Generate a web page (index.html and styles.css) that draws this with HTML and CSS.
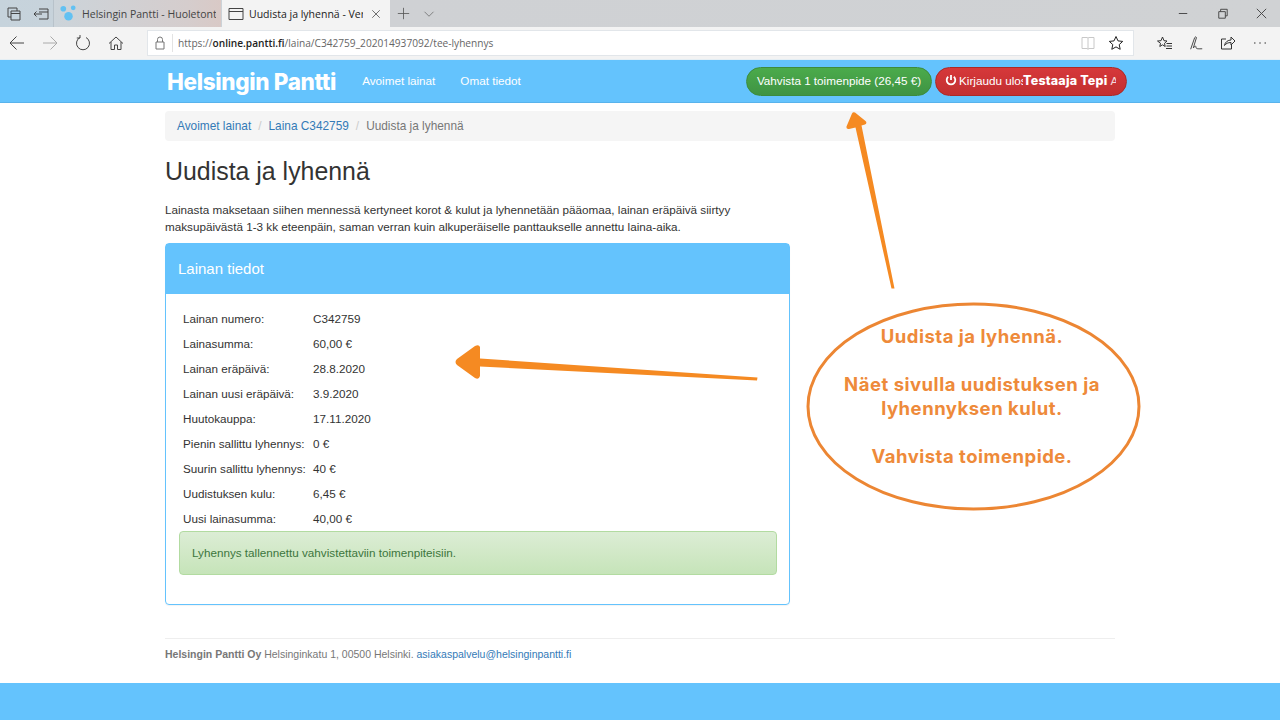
FILE: index.html
```html
<!DOCTYPE html>
<html lang="fi">
<head>
<meta charset="utf-8">
<title>Uudista ja lyhennä</title>
<link rel="stylesheet" href="styles.css">
</head>
<body>
<div class="page">
  <header class="browser">
    <div class="tabstrip">
      <div class="tab-tools">
        <svg class="ico" viewBox="0 0 16 16"><path d="M2 2h9v3M2 2v9h3M5 5h9v9H5zM5 7.500h9" /></svg>
        <svg class="ico" viewBox="0 0 16 16"><path d="M6 3h9v10H6M6 6h9M1 8h8M3.500 5.500L1 8l2.500 2.500" /></svg>
      </div>
      <div class="tab tab-inactive">
        <svg class="favicon" viewBox="0 0 18 18"><circle cx="3.500" cy="4" r="3" /><circle cx="14" cy="3" r="2.500" /><circle cx="9" cy="12" r="4.500" /></svg>
        <span class="tab-title">Helsingin Pantti - Huoletont</span>
      </div>
      <div class="tab tab-active">
        <svg class="ico" viewBox="0 0 16 16"><path d="M1 2.500h14v11H1zM1 5.500h14" /></svg>
        <span class="tab-title">Uudista ja lyhennä - Ver</span>
        <svg class="ico ico-close" viewBox="0 0 16 16"><path d="M3 3l10 10M13 3L3 13" /></svg>
      </div>
      <svg class="ico ico-new" viewBox="0 0 16 16"><path d="M8 1v14M1 8h14" /></svg>
      <svg class="ico ico-chev" viewBox="0 0 16 16"><path d="M2 5l6 6 6-6" /></svg>
      <div class="window-btns">
        <svg class="ico" viewBox="0 0 16 16"><path d="M3 8h9" /></svg>
        <svg class="ico" viewBox="0 0 16 16"><path d="M4 6h7v7H4zM6 6V3.500h7v7h-2" /></svg>
        <svg class="ico" viewBox="0 0 16 16"><path d="M3 3l10 10M13 3L3 13" /></svg>
      </div>
    </div>
    <div class="toolbar">
      <div class="nav-btns">
        <svg class="ico ico-lg" viewBox="0 0 18 18"><path d="M16 9H2M8.500 2.500L2 9l6.500 6.500" /></svg>
        <svg class="ico ico-lg ico-faint" viewBox="0 0 18 18"><path d="M2 9h14M9.500 2.500L16 9l-6.500 6.500" /></svg>
        <svg class="ico ico-lg" viewBox="0 0 18 18"><path d="M6 3.500A6.500 6.500 0 1 0 12 3.500M6 1v3H2.800" /></svg>
        <svg class="ico ico-lg" viewBox="0 0 18 18"><path d="M2 9.500L9 3l7 6.500M4 8v7.500h3.500V11h3v4.500H14V8" /></svg>
      </div>
      <div class="addressbar">
        <svg class="ico ico-lock" viewBox="0 0 12 14"><path d="M2 6h8v7H2zM3.500 6V3.500a2.500 2.500 0 0 1 5 0V6" /></svg>
        <span class="url">https://<b>online.pantti.fi</b>/laina/C342759_202014937092/tee-lyhennys</span>
        <svg class="ico ico-book" viewBox="0 0 16 16"><path d="M2 2.500h5.500l.5 1 .5-1H14v11H8.500l-.5 1-.5-1H2zM8 3.500v10" /></svg>
        <svg class="ico ico-star" viewBox="0 0 16 16"><path d="M8 1.500l2 4.400 4.700.5-3.500 3.200 1 4.700L8 11.900l-4.200 2.400 1-4.700L1.300 6.400 6 5.900z" /></svg>
      </div>
      <div class="tool-btns">
        <svg class="ico" viewBox="0 0 16 16"><path d="M6.500 2l1.500 3.700 3 .3-2.500 2.300.7 3.200-2.700-1.700-2.700 1.700.7-3.200L1.500 6l3.500-.3zM10.500 8.500H16M10.500 11H16M10 13.500h6" /></svg>
        <svg class="ico" viewBox="0 0 18 18"><path d="M3 16L7.500 3Q9 1 9.500 3L6 14.500M6 14.500C8 12 9 12 9 14s3.500 1.500 7 1.500" /></svg>
        <svg class="ico" viewBox="0 0 16 16"><path d="M6 4H1.500v10h10V10M4.500 10.500C5 7 8 5 11 5V2l4 4-4 4V7.500c-3 0-5 1-6.500 3z" /></svg>
        <svg class="ico" viewBox="0 0 16 16"><path d="M2 8h1.500M7.250 8h1.500M12.500 8H14" /></svg>
      </div>
    </div>
  </header>

  <nav class="sitenav">
    <div class="container sitenav-inner">
      <a class="brand">Helsingin Pantti</a>
      <a class="navlink">Avoimet lainat</a>
      <a class="navlink">Omat tiedot</a>
      <div class="nav-actions">
        <a class="pill pill-green">Vahvista 1 toimenpide (26,45 €)</a>
        <a class="pill pill-red">
          <svg class="power" viewBox="0 0 12 12"><path d="M6 1v5M3.200 2.800a4.300 4.300 0 1 0 5.600 0" /></svg>
          <span class="logout">Kirjaudu ulos</span>
          <b class="user">Testaaja Tepi</b>
          <span class="user-rest">A</span>
        </a>
      </div>
    </div>
  </nav>

  <main class="container main">
    <ol class="breadcrumb">
      <li><a>Avoimet lainat</a></li>
      <li class="sep">/</li>
      <li><a>Laina C342759</a></li>
      <li class="sep">/</li>
      <li class="current">Uudista ja lyhennä</li>
    </ol>
    <h1>Uudista ja lyhennä</h1>
    <p class="lead">Lainasta maksetaan siihen mennessä kertyneet korot &amp; kulut ja lyhennetään pääomaa, lainan eräpäivä siirtyy maksupäivästä 1-3 kk eteenpäin, saman verran kuin alkuperäiselle panttaukselle annettu laina-aika.</p>
    <section class="panel">
      <h2 class="panel-head">Lainan tiedot</h2>
      <div class="panel-body">
        <dl class="facts">
          <dt>Lainan numero:</dt><dd>C342759</dd>
          <dt>Lainasumma:</dt><dd>60,00 €</dd>
          <dt>Lainan eräpäivä:</dt><dd>28.8.2020</dd>
          <dt>Lainan uusi eräpäivä:</dt><dd>3.9.2020</dd>
          <dt>Huutokauppa:</dt><dd>17.11.2020</dd>
          <dt>Pienin sallittu lyhennys:</dt><dd>0 €</dd>
          <dt>Suurin sallittu lyhennys:</dt><dd>40 €</dd>
          <dt>Uudistuksen kulu:</dt><dd>6,45 €</dd>
          <dt>Uusi lainasumma:</dt><dd>40,00 €</dd>
        </dl>
        <div class="alert">Lyhennys tallennettu vahvistettaviin toimenpiteisiin.</div>
      </div>
    </section>
    <footer class="foot"><b>Helsingin Pantti Oy</b> Helsinginkatu 1, 00500 Helsinki. <a>asiakaspalvelu@helsinginpantti.fi</a></footer>
  </main>
  <div class="bottombar"></div>

  <svg class="annotations" viewBox="0 0 1280 720">
    <ellipse class="bubble" cx="973.500" cy="406.500" rx="165.500" ry="102.500" />
    <path class="arrow" d="M757.500 377.500L480 358.500V347Q479 344 475 346L457 359Q454 362 457 365L475 378Q479 380 480 376V366.500L757 380.500Z" />
    <path class="arrow" d="M894.500 288.500L861.500 125.500 865 124.500Q867.500 123 865.500 121L855 112.500Q853 111.500 852 113.500L846.500 126.500Q846 129.500 849 129L855.500 127.500 891.500 288.500Z" />
  </svg>
  <div class="callout">
    <p>Uudista ja lyhennä.</p>
    <p>Näet sivulla uudistuksen ja<br>lyhennyksen kulut.</p>
    <p>Vahvista toimenpide.</p>
  </div>
</div>
</body>
</html>
```
FILE: styles.css
```css
* { box-sizing: border-box; }
html, body { margin: 0; padding: 0; }
body { font-family: "Liberation Sans", Arial, sans-serif; font-size: 11.700px; color: #333; background: #fff; }
.page { position: relative; width: 1280px; height: 720px; overflow: hidden; display: flex; flex-direction: column; }
.ico { width: 16px; height: 16px; fill: none; stroke: #444; stroke-width: 1; flex: none; }
.browser { height: 60px; flex: none; display: flex; flex-direction: column; }
.tabstrip { height: 27px; display: flex; align-items: center; background: linear-gradient(90deg, #c6d3dc 0, #cfd1d4 30%, #d0d2d4 100%); }
.tab-tools { width: 53px; padding-left: 6px; display: flex; gap: 11px; }
.tab { height: 27px; display: flex; align-items: center; font-family: "Open Sans", sans-serif; font-size: 10.500px; color: #444; }
.tab-title { white-space: nowrap; overflow: hidden; }
.tab-inactive { width: 168px; padding-left: 6px; gap: 5px; background: linear-gradient(90deg, #ccd4da, #d5cdcd 80%, #d9c9c6); border-left: 1px solid #b8c2ca; }
.tab-inactive .tab-title { width: 134px; }
.favicon { width: 17px; height: 17px; fill: #62c1f2; flex: none; }
.tab-active { width: 168px; margin-left: 1px; padding-left: 6px; gap: 5px; background: #f3f3f3; color: #222; }
.tab-active .tab-title { width: 114px; }
.ico-close { width: 12px; height: 12px; margin-left: 2px; }
.ico-new { width: 13px; height: 13px; margin-left: 7px; stroke: #555; }
.ico-chev { width: 12px; height: 12px; margin-left: 13px; stroke: #666; }
.window-btns { margin-left: auto; display: flex; gap: 24px; padding-right: 11px; }
.window-btns .ico { width: 15px; height: 15px; stroke: #444; }
.toolbar { height: 33px; display: flex; align-items: center; background: #f3f3f3; border-bottom: 1px solid #e4eef4; }
.nav-btns { width: 147px; padding-left: 8px; display: flex; gap: 15px; }
.ico-lg { width: 18px; height: 18px; stroke: #444; }
.ico-faint { stroke: #aaa; }
.addressbar { width: 987px; height: 26px; display: flex; align-items: center; background: #fff; border: 1px solid #e2e6ea; }
.ico-lock { width: 12px; height: 14px; margin: 0 6px 0 6px; stroke: #777; }
.url { font-family: "Open Sans", sans-serif; font-size: 10.150px; color: #666; padding-left: 5px; border-left: 1px solid #e3e3e3; line-height: 18px; flex: 1; white-space: nowrap; }
.url b { color: #222; font-weight: 600; }
.ico-book { margin-right: 12px; stroke: #c8c8c8; }
.ico-star { margin-right: 9px; stroke: #222; }
.tool-btns { display: flex; gap: 16px; padding-left: 22px; }
.tool-btns .ico { width: 16px; height: 16px; stroke: #333; }
.container { width: 950px; margin: 0 auto; }
.sitenav { height: 43px; flex: none; background: #64c3fd; border-bottom: 1px solid #58b3ec; }
.sitenav-inner { display: flex; align-items: center; height: 42px; }
.brand { font-family: Inter, sans-serif; font-weight: 800; font-size: 22.500px; letter-spacing: -.35px; color: #fff; margin-left: 2px; margin-right: 26px; white-space: nowrap; }
.navlink { color: #fff; margin-right: 25px; margin-bottom: 2px; white-space: nowrap; }
.nav-actions { margin-left: auto; margin-right: -12px; display: flex; gap: 3px; }
.pill { height: 29px; padding-bottom: 2px; border-radius: 15px; display: flex; align-items: center; color: #fff; white-space: nowrap; overflow: hidden; }
.pill-green { width: 186px; justify-content: center; background: linear-gradient(#4bab4b, #3f9343); border: 1px solid #3d8b3d; }
.pill-red { width: 192px; padding-left: 9px; background: linear-gradient(#d6383a, #c22f30); border: 1px solid #ac2925; }
.power { width: 12px; height: 12px; fill: none; stroke: #fff; stroke-width: 1.800; flex: none; margin-right: 2px; }
.logout { width: 64px; overflow: hidden; flex: none; }
.user { font-family: Inter, sans-serif; font-weight: 800; font-size: 12.500px; letter-spacing: .2px; flex: none; }
.user-rest { margin-left: 3px; width: 6px; overflow: hidden; flex: none; opacity: .8; }
.main { flex: 1; min-height: 0; display: flex; flex-direction: column; }
.breadcrumb { list-style: none; margin: 8px 0 0; padding: 0 12px; height: 30px; display: flex; align-items: center; gap: 7px; background: #f5f5f5; border-radius: 4px; font-size: 11.850px; }
.breadcrumb a { color: #337ab7; }
.sep { color: #ccc; }
.current { color: #777; }
h1 { margin: 16px 0 0; font-size: 24.900px; font-weight: 400; line-height: 28px; color: #333; }
.lead { margin: 16px 0 0; width: 580px; line-height: 17px; color: #333; }
.panel { margin-top: 8px; width: 625px; height: 362px; border: 1px solid #64c3fd; border-radius: 4px; box-shadow: 0 1px 1px rgba(0,0,0,.05); }
.panel-head { margin: 0; height: 50px; padding: 0 12px 2px; display: flex; align-items: center; background: #64c3fd; color: #fff; font-size: 15px; font-weight: 400; }
.panel-body { padding: 12px 12px 0 13px; }
.facts { margin: 0; padding-left: 4px; display: grid; grid-template-columns: 130px 1fr; grid-auto-rows: 25px; align-items: center; }
.facts dt, .facts dd { margin: 0; white-space: nowrap; }
.alert { height: 44px; padding-left: 12px; padding-bottom: 2px; display: flex; align-items: center; color: #3c763d; border: 1px solid #b2dba1; border-radius: 4px; background: linear-gradient(#dcedd5, #c6e4b9); }
.foot { margin-top: 33px; padding-top: 8px; height: 45px; border-top: 1px solid #eee; font-size: 10.500px; color: #777; line-height: 15px; }
.foot a { color: #337ab7; }
.bottombar { height: 37px; flex: none; background: #64c3fd; }
.annotations { position: absolute; left: 0; top: 0; width: 1280px; height: 720px; pointer-events: none; }
.bubble { fill: #fff; stroke: #ec8633; stroke-width: 3; }
.arrow { fill: #f58a22; }
.callout { position: absolute; left: 810px; top: 324px; width: 324px; text-align: center; font-family: Inter, sans-serif; font-weight: 700; font-size: 18.500px; letter-spacing: .5px; line-height: 24px; color: #ee8a3a; }
.callout p { margin: 0 0 24px; }
```
